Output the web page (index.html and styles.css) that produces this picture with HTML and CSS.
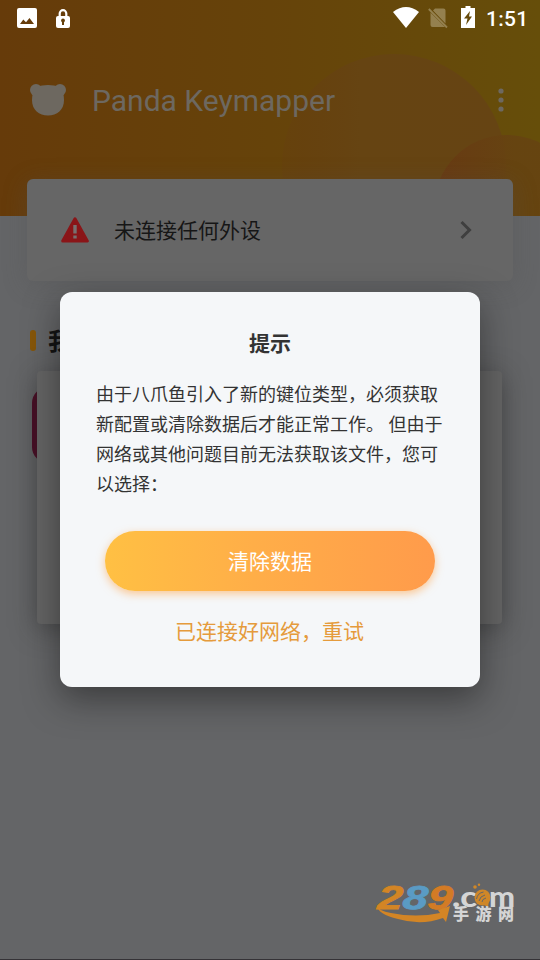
FILE: index.html
```html
<!DOCTYPE html>
<html lang="zh-CN">
<head>
<meta charset="utf-8">
<title>Panda Keymapper</title>
<link rel="stylesheet" href="styles.css">
</head>
<body>
<div class="screen">
  <header class="header">
    <svg class="bubbles" width="540" height="216" viewBox="0 0 540 216">
      <defs>
        <linearGradient id="big" x1="0" x2="1"><stop offset="0" stop-color="#663c12" stop-opacity=".25"/><stop offset=".35" stop-color="#664412"/><stop offset="1" stop-color="#664413"/></linearGradient>
        <linearGradient id="small" x1="0" x2="1"><stop offset="0" stop-color="#683913"/><stop offset=".55" stop-color="#664311"/></linearGradient>
      </defs>
      <circle cx="394" cy="166" r="112" fill="url(#big)"/>
      <circle cx="507" cy="208" r="73" fill="url(#small)" fill-opacity=".9"/>
    </svg>
    <div class="status">
      <svg width="20" height="20" viewBox="0 0 20 20"><path fill="#fff" fill-rule="evenodd" d="M2 0H18Q20 0 20 2V18Q20 20 18 20H2Q0 20 0 18V2Q0 0 2 0ZM3 16H17L12.500 10L9 14.300L6.300 11.500Z"/></svg>
      <svg class="lock" width="14" height="19" viewBox="0 0 14 19"><path fill="none" stroke="#fff" stroke-width="2.200" d="M3.700 8V4.500a3.300 3.300 0 0 1 6.600 0V8"/><rect y="7" width="14" height="12" rx="2" fill="#fff"/><circle cx="7" cy="11.500" r="1.900" fill="#66400a"/><path d="M6 12h2v4H6z" fill="#66400a"/></svg>
      <span class="grow"></span>
      <svg class="wifi" width="26" height="21" viewBox="0 0 26 21"><path fill="#fff" d="M0 5Q13-5 26 5L13 21Z"/></svg>
      <svg class="sim" width="20" height="22" viewBox="0 0 20 22"><path fill="#94804f" d="M7 1.500H15.500Q17.500 1.500 17.500 3.500V16.500L5 3.500ZM2.500 5.500L17 20H4.500Q2.500 20 2.500 18Z"/><path stroke="#94804f" stroke-width="1.800" d="M.8 2L19 20.500"/></svg>
      <svg class="battery" width="14" height="22" viewBox="0 0 14 22"><path fill="#fff" d="M4.500 0h5v2H14v20H0V2h4.500z"/><path fill="#664a0a" d="M9 5L3 12.500h3.500L5 19l6-8.500H8z"/></svg>
      <span class="clock">1:51</span>
    </div>
    <div class="appbar">
      <svg width="36" height="32" viewBox="0 0 36 32" fill="#6d6860"><circle cx="6" cy="6" r="6"/><circle cx="30" cy="6" r="6"/><path d="M6 3Q18-1 30 3Q34 8 34 16C34 26 27 31.500 18 31.500S2 26 2 16Q2 8 6 3Z"/></svg>
      <h1 class="title">Panda Keymapper</h1>
      <svg class="more" width="6" height="24" viewBox="0 0 6 24" fill="#6d6860"><circle cx="3" cy="3" r="2.600"/><circle cx="3" cy="12" r="2.600"/><circle cx="3" cy="21" r="2.600"/></svg>
    </div>
  </header>
  <section class="device">
    <svg width="28" height="26" viewBox="0 0 28 26"><path fill="#8a1518" stroke="#8a1518" stroke-width="3" stroke-linejoin="round" d="M14 1.700L26.300 24H1.700Z"/><path fill="#77706f" d="M12.300 8h3.400v8.500h-3.400zM12.300 18.500h3.400v3h-3.400z"/></svg>
    <span class="device-name">未连接任何外设</span>
    <svg width="13" height="20" viewBox="0 0 13 20"><path fill="none" stroke="#3f3f3f" stroke-width="3" d="M1.500 2L9.500 10L1.500 18"/></svg>
  </section>
  <h2 class="section"><i class="mark"></i>我的游戏</h2>
  <div class="games"><i class="game"></i><div class="panel"></div></div>
  <div class="dialog" role="dialog">
    <h3 class="dialog-title">提示</h3>
    <p class="message">由于八爪鱼引入了新的键位类型，必须获取<br>新配置或清除数据后才能正常工作。 但由于<br>网络或其他问题目前无法获取该文件，您可<br>以选择：</p>
    <button class="primary">清除数据</button>
    <button class="retry">已连接好网络，重试</button>
  </div>
  <svg class="logo" width="142" height="44" viewBox="0 0 142 44">
    <text class="number" transform="translate(1 25.500) skewX(-5) scale(1.360 1)"><tspan class="gold">2</tspan><tspan class="blue">8</tspan><tspan class="rust">9</tspan></text>
    <path fill="#d38525" d="M1 22Q2 28 15 30Q40 35 64 30L62 27L74 23L70 39L67 35Q45 43 22 36Q1 31 1 22Z"/>
    <text class="com" x="76" y="23.500" textLength="25" lengthAdjust="spacingAndGlyphs">.c</text>
    <text class="com" x="113" y="23.500" textLength="26" lengthAdjust="spacingAndGlyphs">m</text>
    <circle cx="106.500" cy="14.500" r="8" fill="#cf8728"/><circle cx="99" cy="4" r="1.800" fill="#cf8728"/><circle cx="103" cy="1.800" r="1.200" fill="#cf8728"/><path fill="#cf8728" d="M106 21l7-3-1 6z"/>
    <path fill="none" stroke="#656667" d="M100.500 16q1-6 7-7M103 18q1-5 6-6M106 19q0-3 4-4"/>
    <text class="cn" y="36.500" x="77 99.500 122">手游网</text>
  </svg>
</div>
</body>
</html>
```

FILE: styles.css
```css
* { box-sizing: border-box; }
body { margin: 0; font-family: Roboto, "Noto Sans CJK SC", sans-serif; }
.screen { position: relative; width: 540px; height: 960px; overflow: hidden; background: #646567; border-bottom: 1px solid #353337; }
.header { position: relative; height: 216px; background: linear-gradient(90deg, #663b0a, #66430a 50%, #664e0a); }
.bubbles { position: absolute; top: 0; left: 0; }
.status { position: relative; display: flex; align-items: center; height: 36px; padding: 0 12px 0 17px; }
.lock { margin-left: 19px; }
.grow { flex: 1; }
.sim { margin-left: 9px; }
.battery { margin-left: 13px; margin-bottom: 2px; }
.wifi { margin-bottom: 1px; }
.clock { margin-left: 11px; padding-top: 1px; color: #fff; font-size: 21px; font-weight: 500; line-height: 36px; width: 42px; letter-spacing: .3px; white-space: nowrap; }
.appbar { position: relative; display: flex; align-items: center; height: 64px; margin-top: 32px; padding: 0 36px 0 30px; }
.title { flex: 1; margin: 0 0 0 26px; padding-top: 2px; color: #6d6860; font-size: 30px; font-weight: 400; line-height: 40px; }
.device { position: relative; display: flex; align-items: center; width: 486px; height: 102px; margin: -37px 27px 0; padding: 0 40px 0 34px; border-radius: 6px; background: #666; box-shadow: 0 4px 24px rgba(78, 80, 78, .3); }
.device-name { flex: 1; margin-left: 25px; padding-top: 2px; color: #161616; font-size: 21px; line-height: 30px; }
.section { display: flex; align-items: center; height: 36px; margin: 42px 0 0 30px; padding-top: 1px; color: #111; font-size: 24px; font-weight: 700; line-height: 36px; }
.mark { width: 6px; height: 21px; margin: -2px 12px 0 0; border-radius: 3px; background: #865609; }
.games { position: relative; height: 253px; margin: 12px 38px 0 37px; }
.game { position: absolute; left: -5px; top: 16px; width: 76px; height: 76px; border-radius: 16px; background: #4d0b25; }
.panel { position: relative; height: 100%; border-radius: 4px; background: #646464; box-shadow: 0 5px 26px rgba(40, 40, 40, .5); }
.dialog { position: absolute; top: 292px; left: 60px; display: flex; flex-direction: column; align-items: center; width: 420px; height: 395px; padding: 37px 36px 0; border-radius: 12px; background: #f5f7f9; box-shadow: 0 12px 34px rgba(20, 20, 20, .5); }
.dialog-title { margin: 0; color: #333; font-size: 21px; font-weight: 700; line-height: 30px; }
.message { align-self: stretch; margin: 21px 0 0; color: #333; font-size: 18px; line-height: 30px; white-space: nowrap; }
.primary { width: 330px; height: 60px; margin-top: 31px; padding: 0 0 2px; border: 0; border-radius: 30px; background: linear-gradient(90deg, #ffc043, #ffae48 45%, #ff9b4b); box-shadow: 0 3px 8px rgba(255, 160, 65, .55); color: #fff; font: 21px Roboto, "Noto Sans CJK SC", sans-serif; }
.retry { height: 36px; margin-top: 21px; padding: 0 1px 0 0; border: 0; background: none; color: #e59b3c; font: 21px Roboto, "Noto Sans CJK SC", sans-serif; }
.logo { position: absolute; left: 376px; top: 883px; overflow: visible; }
.number { font: italic 700 33px "Liberation Sans", sans-serif; stroke-width: .8px; }
.gold { fill: #d38525; stroke: #d38525; }
.blue { fill: #5a9bc4; stroke: #5a9bc4; }
.rust { fill: #d37b25; stroke: #d37b25; }
.com { font: 900 28px Lato, sans-serif; fill: #d4d5d5; }
.cn { font: 900 16px "Noto Sans CJK SC", sans-serif; fill: #d4d5d5; }
```
